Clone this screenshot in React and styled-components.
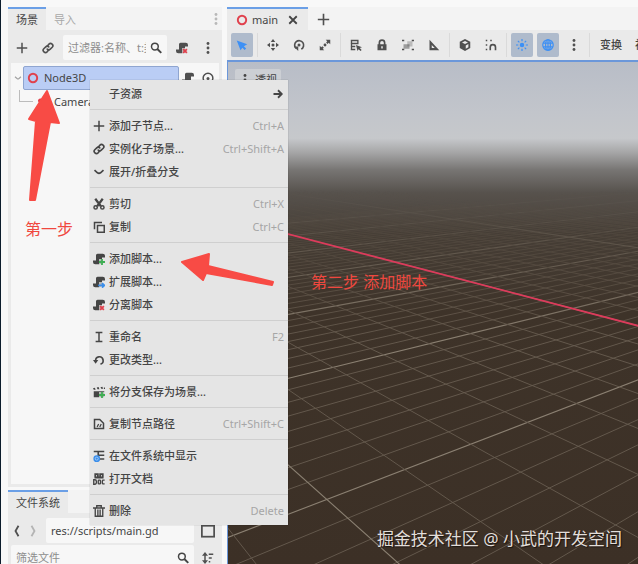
import React from 'react';
import styled, { createGlobalStyle } from 'styled-components';

const GlobalStyle = createGlobalStyle`
  * {
    box-sizing: border-box;
  }

  body {
    margin: 0;
    background-color: #f8f8f8;
    font-family: "Noto Sans", "Noto Sans CJK SC", sans-serif;
    font-size: 11px;
    line-height: 16px;
    color: #454545;
  }

  button,
  input {
    font: inherit;
    color: inherit;
  }
`;

// every icon is drawn on a 16 x 16 grid
const shapes = {
  add: <path d="M8 1v14M1 8h14" stroke="currentColor" strokeWidth="2" fill="none" />,
  close: <path d="M3 3l10 10M13 3L3 13" stroke="currentColor" strokeWidth="2.4" fill="none" />,
  link: (
    <g fill="none" stroke="currentColor" strokeWidth="2.2" strokeLinecap="round">
      <path d="M7 5.5l2.2-2.6a3 3 0 0 1 4.4 4.1L11 9.5a3 3 0 0 1-4 0" />
      <path d="M9 10.5l-2.2 2.6a3 3 0 0 1-4.4-4.1L5 6.5a3 3 0 0 1 4 0" />
    </g>
  ),
  search: (
    <g fill="none" stroke="currentColor" strokeWidth="2">
      <circle cx="6.5" cy="6" r="4.5" />
      <path d="M9.8 9.3L15 14.5" strokeWidth="2.6" />
    </g>
  ),
  dots: (
    <g fill="currentColor">
      <circle cx="8" cy="2" r="1.9" />
      <circle cx="8" cy="8" r="1.9" />
      <circle cx="8" cy="14" r="1.9" />
    </g>
  ),
  script: <path d="M6 1h7a3 3 0 0 1 3 3v2h-4v6a3 3 0 0 1-3 3H3a3 3 0 0 1-3-3v-2h4V3a2 2 0 0 1 2-2z" fill="currentColor" />,
  eye: (
    <g fill="none" stroke="currentColor" strokeWidth="2">
      <path d="M3.5 13A6.5 6.5 0 1 1 12.5 13" />
      <path d="M4 13.5c2.5 1.5 5.5 1.5 8 0" />
      <circle cx="8" cy="8.5" r="2" fill="currentColor" stroke="none" />
    </g>
  ),
  chevron: <path d="M2 5.5l4 3.500q2 1.500 4 0l4-3.500" fill="none" stroke="currentColor" strokeWidth="2.2" />,
  left: <path d="M10 1L6 8l4 7" fill="none" stroke="currentColor" strokeWidth="2.4" />,
  right: <path d="M6 1l4 7-4 7" fill="none" stroke="currentColor" strokeWidth="2.4" />,
  node: <circle cx="8" cy="8" r="5.6" fill="none" stroke="#e0414d" strokeWidth="2.6" />,
  camera: <path d="M10 2a3 3 0 0 0-3 3 3 3 0 1 0-4 4v4h8v-2l4 2V6l-2 1a3 3 0 0 0-3-5z" fill="#e0414d" />,
  arrow: <path d="M2 8h10M8 3l5 5-5 5" fill="none" stroke="currentColor" strokeWidth="2.4" />,
  cut: (
    <g fill="none" stroke="currentColor">
      <path d="M3 1l7.5 10M13 1L5.5 11" strokeWidth="3" />
      <circle cx="3.5" cy="12.5" r="2.2" strokeWidth="2" />
      <circle cx="12.5" cy="12.5" r="2.2" strokeWidth="2" />
    </g>
  ),
  copy: (
    <g fill="none" stroke="currentColor" strokeWidth="2">
      <path d="M2 11V2h10" />
      <rect x="6" y="6" width="9" height="9" />
    </g>
  ),
  rename: <path d="M3.5 2h9M3.5 14h9M8 2v12" fill="none" stroke="currentColor" strokeWidth="2" />,
  reload: (
    <g>
      <path d="M3.5 9a5 5 0 1 1 6.5 4.5" fill="none" stroke="currentColor" strokeWidth="2.2" />
      <path d="M0 8h7l-3.5 5z" fill="currentColor" />
    </g>
  ),
  clapper: (
    <g fill="currentColor">
      <path d="M1 7h14v8H1z" />
      <path d="M0 3l2.500-.6 1 2.6H1zM5 2l2.500-.6 1 2.900H6zM10 1.500L12.500 1l1 2.600H11zM14.500 2H16v2h-1.500z" />
    </g>
  ),
  path: (
    <g fill="none" stroke="currentColor" strokeWidth="2">
      <path d="M2 2h7l5 5v7H2z" />
      <path d="M5.5 12l2-4M9 12l2-4" strokeWidth="1.7" />
    </g>
  ),
  filesystem: (
    <g>
      <path d="M1 2h14M7 2v10h8M7 7h8" fill="none" stroke="currentColor" strokeWidth="2.2" />
      <circle cx="5" cy="11.5" r="4.5" fill="#3b8eea" />
      <circle cx="5" cy="11.5" r="2" fill="none" stroke="#b5d6fa" strokeWidth="1" />
    </g>
  ),
  help: (
    <g fill="none" stroke="currentColor" strokeWidth="1.8">
      <path d="M3 6V1.5h3.5V6M9.5 6V1.5H13V6M2 6h12" strokeWidth="2.4" />
      <path d="M1 9v6h1.5a2 2 0 0 0 2-2v-2a2 2 0 0 0-2-2zM15.5 9.5h-2a1 1 0 0 0-1 1v3a1 1 0 0 0 1 1h2" />
      <rect x="7" y="9.5" width="3" height="5" rx="1" />
    </g>
  ),
  trash: (
    <path
      d="M5 3V1h6v2M0 4h16M3 4v11h10V4M6.5 6v8M9.5 6v8"
      fill="none"
      stroke="currentColor"
      strokeWidth="1.8"
    />
  ),
  select: <path d="M1 2l14 5-4.5 2.5 3 3-2 2-3-3L6 15z" fill="#3d90f5" />,
  move: (
    <g fill="currentColor">
      <circle cx="8" cy="8" r="2" />
      <path d="M8 0l3 4H5zM8 16l3-4H5zM0 8l4-3v6zM16 8l-4-3v6z" />
    </g>
  ),
  rotate: (
    <g>
      <path d="M4 12.5a6 6 0 1 1 7 1" fill="none" stroke="currentColor" strokeWidth="2.2" />
      <path d="M1 10h6v6z" fill="currentColor" />
      <circle cx="8" cy="8" r="2" fill="currentColor" />
    </g>
  ),
  scale: (
    <g fill="currentColor">
      <path d="M9 1h6v6l-2-2-1.500 1.500-2-2L11 3zM7 15H1V9l2 2 1.500-1.500 2 2L5 13z" />
      <circle cx="8" cy="8" r="1.9" />
    </g>
  ),
  list: (
    <g>
      <path d="M2 1v13M1 2h10M1 6h10M1 10h6M1 14h6M10.500 1v6" fill="none" stroke="currentColor" strokeWidth="1.800" />
      <path d="M8 8l8 3-3 1 2.500 2.500L14 16l-2.500-2.500L10 16z" fill="currentColor" />
    </g>
  ),
  lock: (
    <g>
      <path d="M4.5 8V5a3.5 3.5 0 0 1 7 0v3" fill="none" stroke="currentColor" strokeWidth="2.2" />
      <path d="M2 7h12v8H2zM7 9.5v3h2v-3z" fill="currentColor" fillRule="evenodd" />
    </g>
  ),
  group: (
    <g fill="currentColor">
      <path d="M0 1h3v2H0zM13 1h3v2h-3zM0 13h3v2H0zM13 13h3v2h-3z" />
      <path d="M7 3h7v7H7z" opacity=".3" />
      <path d="M2 7h8v6H2z" opacity=".5" />
    </g>
  ),
  ruler: <path d="M2 1l13 14H2zM5 8v4h4z" fill="currentColor" fillRule="evenodd" />,
  cube: (
    <g>
      <path d="M8 0l7 3.5v8.5L8 16l-7-4V3.5z" fill="currentColor" />
      <path d="M4 4.500l4-2 4 2-4 2zM9 8.500l3.500-2v4.500L9 13z" fill="#eaeaea" />
    </g>
  ),
  snap: (
    <g fill="none" stroke="currentColor" strokeWidth="2">
      <path d="M7 15v-4a3.5 3.5 0 0 1 7 0v4" strokeWidth="2.2" />
      <path d="M1 2h2M7 2h2M1 8h2M1 14h2" />
    </g>
  ),
  sun: (
    <g fill="none" stroke="#3d90f5" strokeWidth="1.6">
      <circle cx="8" cy="8" r="3" fill="#3d90f5" stroke="none" />
      <path d="M8 0v3M8 13v3M0 8h3M13 8h3M2.5 2.5l2 2M11.5 11.5l2 2M13.5 2.5l-2 2M4.5 11.5l-2 2" />
    </g>
  ),
  globe: (
    <g fill="none" stroke="#3d90f5" strokeWidth="1.6">
      <circle cx="8" cy="8" r="7" />
      <ellipse cx="8" cy="8" rx="3.2" ry="7" />
      <path d="M1.5 5.5h13M1.5 10.5h13M8 1v14" />
    </g>
  ),
  box: <rect x="1" y="2" width="14" height="12.5" fill="none" stroke="currentColor" strokeWidth="2" />,
  sort: (
    <g fill="none" stroke="currentColor" strokeWidth="2">
      <path d="M4 2v12M9 3h6M9 8h4M9 13h2" />
      <path d="M0 5l4-5 4 5zM0 11l4 5 4-5z" fill="currentColor" stroke="none" />
    </g>
  ),
};

const badges = {
  plus: <path d="M12 8v8M8 12h8" stroke="#3fae54" strokeWidth="2.4" />,
  extend: <path d="M7 12.5h8M12 9.5l3 3-3 3" stroke="#3b8eea" strokeWidth="2.4" fill="none" />,
  cross: <path d="M9.5 9.5l5 5M14.5 9.5l-5 5" stroke="#e0414d" strokeWidth="2.4" />,
};

const Icon = ({ name, badge, size = 12 }) => (
  <IconSvg viewBox="0 0 16 16" width={size} height={size} aria-hidden="true">
    {shapes[name]}
    {badge && <path d="M8 8h8v8H8z" fill="#e6e6e6" opacity=".7" />}
    {badge && badges[badge]}
  </IconSvg>
);

const menuGroups = [
  [{ label: '子资源', submenu: true }],
  [
    { label: '添加子节点...', icon: 'add', keys: 'Ctrl+A' },
    { label: '实例化子场景...', icon: 'link', keys: 'Ctrl+Shift+A' },
    { label: '展开/折叠分支', icon: 'chevron' },
  ],
  [
    { label: '剪切', icon: 'cut', keys: 'Ctrl+X' },
    { label: '复制', icon: 'copy', keys: 'Ctrl+C' },
  ],
  [
    { label: '添加脚本...', icon: 'script', badge: 'plus' },
    { label: '扩展脚本...', icon: 'script', badge: 'extend' },
    { label: '分离脚本', icon: 'script', badge: 'cross' },
  ],
  [
    { label: '重命名', icon: 'rename', keys: 'F2' },
    { label: '更改类型...', icon: 'reload' },
  ],
  [{ label: '将分支保存为场景...', icon: 'clapper', badge: 'plus' }],
  [{ label: '复制节点路径', icon: 'path', keys: 'Ctrl+Shift+C' }],
  [
    { label: '在文件系统中显示', icon: 'filesystem' },
    { label: '打开文档', icon: 'help' },
  ],
  [{ label: '删除', icon: 'trash', keys: 'Delete' }],
];

const tools = [
  [{ icon: 'select', label: '选择', on: true }],
  [
    { icon: 'move', label: '移动' },
    { icon: 'rotate', label: '旋转' },
    { icon: 'scale', label: '缩放' },
  ],
  [
    { icon: 'list', label: '列表选择' },
    { icon: 'lock', label: '锁定' },
    { icon: 'group', label: '编组' },
    { icon: 'ruler', label: '标尺' },
  ],
  [
    { icon: 'cube', label: '局部空间' },
    { icon: 'snap', label: '吸附' },
  ],
  [
    { icon: 'sun', label: '预览阳光', on: true },
    { icon: 'globe', label: '预览环境', on: true },
    { icon: 'dots', label: '更多' },
  ],
];

// Ground grid: each family of parallel lines meets in one point on the horizon,
// and 1 / depth grows by the same step from line to line.
const HORIZON = 137;
const families = [
  { vx: 1270, first: 0.00265, step: 0.0001865, from: -9, to: 52 },
  { vx: -80, first: 0.00305, step: 0.000911, from: -3, to: 22 },
];

const gridLines = families.flatMap(({ vx, first, step, from, to }) => {
  const lines = [];
  for (let n = from; n <= to; n++) {
    const slope = 1 / (first + n * step) / (288 - vx);
    lines.push({
      key: `${vx}:${n}`,
      y1: HORIZON + slope * (200 - vx),
      y2: HORIZON + slope * (1000 - vx),
      major: n % 8 === 0,
    });
  }
  return lines;
});

const Ground = () => (
  <Scene viewBox="228 62 410 502" preserveAspectRatio="xMinYMin slice" aria-hidden="true">
    <defs>
      <linearGradient id="sky" gradientUnits="userSpaceOnUse" x1="0" y1="62" x2="0" y2="564">
        <stop offset="0" stopColor="#b8bdc7" />
        <stop offset=".1" stopColor="#c2c5cb" />
        <stop offset=".152" stopColor="#c6c8cb" />
        <stop offset=".18" stopColor="#a6a6a7" />
        <stop offset=".215" stopColor="#777573" />
        <stop offset=".26" stopColor="#57524d" />
        <stop offset=".34" stopColor="#463e36" />
        <stop offset=".5" stopColor="#3e3329" />
        <stop offset="1" stopColor="#3c3026" />
      </linearGradient>
      <linearGradient id="fade" gradientUnits="userSpaceOnUse" x1="0" y1="190" x2="0" y2="340">
        <stop offset="0" stopColor="#000" />
        <stop offset=".4" stopColor="#666" />
        <stop offset="1" stopColor="#fff" />
      </linearGradient>
      <mask id="distance" maskUnits="userSpaceOnUse" x="200" y="62" width="800" height="900">
        <rect x="200" y="62" width="800" height="900" fill="url(#fade)" />
      </mask>
    </defs>
    <rect x="200" y="62" width="900" height="900" fill="url(#sky)" />
    <g mask="url(#distance)">
      {gridLines.map((line) => (
        <line
          key={line.key}
          x1="200"
          x2="1000"
          y1={line.y1}
          y2={line.y2}
          stroke={line.major ? '#8b8072' : '#685c50'}
          strokeWidth={line.major ? 1.1 : 0.9}
        />
      ))}
    </g>
    <line x1="200" y1="211" x2="1000" y2="420.5" stroke="#dc3b5b" strokeWidth="1.8" />
  </Scene>
);

const App = () => (
  <Editor>
    <GlobalStyle />
    <Sidebar>
      <Dock $grow>
        <TabBar>
          <Tab $active>场景</Tab>
          <Tab>导入</Tab>
          <DockMenu aria-label="面板菜单"><Icon name="dots" /></DockMenu>
        </TabBar>
        <Panel>
          <Row>
            <IconButton aria-label="添加节点"><Icon name="add" /></IconButton>
            <IconButton aria-label="实例化"><Icon name="link" /></IconButton>
            <Field $tight>
              <input aria-label="过滤节点" placeholder="过滤器:名称、t:类型" />
              <Icon name="search" />
            </Field>
            <IconButton aria-label="分离脚本"><Icon name="script" badge="cross" /></IconButton>
            <IconButton aria-label="更多"><Icon name="dots" /></IconButton>
          </Row>
          <Tree>
            <TreeRow>
              <Fold><Icon name="chevron" size={8} /></Fold>
              <Node $selected>
                <Icon name="node" />
                Node3D
              </Node>
              <TreeActions>
                <Icon name="script" />
                <Icon name="eye" />
              </TreeActions>
            </TreeRow>
            <TreeRow>
              <Branch />
              <Node>
                <Icon name="camera" />
                Camera3D
              </Node>
            </TreeRow>
          </Tree>
        </Panel>
      </Dock>
      <Dock>
        <TabBar>
          <Tab $active>文件系统</Tab>
        </TabBar>
        <Panel>
          <Row $tight>
            <History>
              <button aria-label="后退"><Icon name="left" /></button>
              <button aria-label="前进" disabled><Icon name="right" /></button>
            </History>
            <Field>
              <input aria-label="路径" defaultValue="res://scripts/main.gd" />
            </Field>
            <IconButton aria-label="切换布局"><Icon name="box" size={14} /></IconButton>
          </Row>
          <Row $tight>
            <Field>
              <input aria-label="筛选文件" placeholder="筛选文件" />
              <Icon name="search" />
            </Field>
            <IconButton aria-label="排序"><Icon name="sort" /></IconButton>
          </Row>
        </Panel>
      </Dock>
    </Sidebar>

    <Main>
      <TabBar $spaced>
        <Tab $active $scene>
          <Icon name="node" />
          main
          <Icon name="close" />
        </Tab>
        <IconButton aria-label="新建场景"><Icon name="add" size={13} /></IconButton>
      </TabBar>
      <Toolbar>
        {tools.map((group, i) => (
          <React.Fragment key={i}>
            {group.map((tool) => (
              <IconButton key={tool.icon} aria-label={tool.label} $on={tool.on}>
                <Icon name={tool.icon} />
              </IconButton>
            ))}
            <Divider />
          </React.Fragment>
        ))}
        <TextButton>变换</TextButton>
        <TextButton>视图</TextButton>
      </Toolbar>
      <Viewport>
        <Ground />
        <ViewButton>
          <Icon name="dots" />
          透视
        </ViewButton>
        <Watermark>掘金技术社区 @ 小武的开发空间</Watermark>
      </Viewport>
    </Main>

    <Menu role="menu">
      {menuGroups.map((group, i) => (
        <MenuGroup key={i}>
          {group.map((item) => (
            <MenuItem key={item.label} role="menuitem">
              {item.icon ? <Icon name={item.icon} badge={item.badge} /> : <span />}
              <span>{item.label}</span>
              {item.keys && <kbd>{item.keys}</kbd>}
              {item.submenu && <Icon name="arrow" />}
            </MenuItem>
          ))}
        </MenuGroup>
      ))}
    </Menu>

    <Arrows aria-hidden="true">
      <path d="M47 91L59 123L50 122L35 200H30L36 121L29 119Z" />
      <path d="M182 262L209 254L208 266L273 282L272 285L206 273L203 280Z" />
    </Arrows>
    <Note $x={24} $y={217}>第一步</Note>
    <Note $x={310} $y={270}>第二步 添加脚本</Note>
  </Editor>
);

const IconSvg = styled.svg`
  display: block;
  flex: none;
`;

const Editor = styled.div`
  position: relative;
  display: grid;
  grid-template-columns: 214px 1fr;
  column-gap: 5px;
  height: 100vh;
  padding: 7px 0 0 7px;
  border-left: 1px solid #0c1c2c;
  overflow: hidden;
`;

const Sidebar = styled.aside`
  display: flex;
  flex-direction: column;
  gap: 3px;
  min-height: 0;
`;

const Dock = styled.section`
  display: flex;
  flex-direction: column;
  flex: ${({ $grow }) => ($grow ? '1 1 0' : '0 0 74px')};
  min-height: 0;
  overflow: hidden;
`;

const TabBar = styled.div`
  display: flex;
  flex: none;
  align-items: stretch;
  gap: ${({ $spaced }) => ($spaced ? '4px' : '0')};
  height: 23px;
  background-color: #f3f3f3;
`;

const Tab = styled.button`
  display: flex;
  align-items: center;
  gap: 4px;
  padding: ${({ $scene }) => ($scene ? '0 9px' : '0 8px')};
  border: none;
  border-top: 2px solid ${({ $active }) => ($active ? '#6b9fe6' : 'transparent')};
  background-color: ${({ $active }) => ($active ? '#eaeaea' : 'transparent')};
  color: ${({ $active }) => ($active ? '#454545' : '#a8a8a8')};

  svg:last-child {
    margin-left: 5px;
  }
`;

const DockMenu = styled.button`
  margin-left: auto;
  padding: 0;
  border: none;
  background: none;
  color: #b8b8b8;
`;

const Panel = styled.div`
  display: flex;
  flex: 1;
  flex-direction: column;
  min-height: 0;
  padding: 4px 3px 3px;
  background-color: #eaeaea;
`;

const Row = styled.div`
  display: flex;
  flex: none;
  align-items: center;
  gap: ${({ $tight }) => ($tight ? '3px' : '4px')};
  height: 27px;
`;

const IconButton = styled.button`
  display: flex;
  flex: none;
  align-items: center;
  justify-content: center;
  width: 22px;
  height: 24px;
  padding: 0;
  border: none;
  border-radius: 2px;
  background-color: ${({ $on }) => ($on ? '#afbbcc' : 'transparent')};
  color: #505050;
`;

const Field = styled.div`
  display: flex;
  flex: 1;
  align-items: center;
  gap: ${({ $tight }) => ($tight ? '4px' : '8px')};
  min-width: 0;
  height: 25px;
  padding: 0 5px;
  border-radius: 2px;
  background-color: #f7f7f7;

  input {
    flex: 1;
    min-width: 0;
    padding: 0;
    border: none;
    outline: none;
    background: none;
  }

  input::placeholder {
    color: #8d8d8d;
  }
`;

const Tree = styled.div`
  flex: 1;
  margin-top: 2px;
  padding: 3px 0;
  background-color: #f7f7f7;
`;

const TreeRow = styled.div`
  display: flex;
  align-items: center;
  height: 24px;
`;

const Fold = styled.span`
  width: 12px;
  padding-left: 3px;
  color: #a0a0a0;
`;

const Branch = styled.span`
  align-self: flex-start;
  width: 14px;
  height: 12px;
  margin-left: 8px;
  border: solid #bcbcbc;
  border-width: 0 0 1px 1px;
`;

const Node = styled.div`
  display: flex;
  flex: 0 0 156px;
  align-items: center;
  gap: 5px;
  height: 24px;
  padding: 0 3px;
  border: 1px solid ${({ $selected }) => ($selected ? '#8fa5d0' : 'transparent')};
  border-radius: 2px;
  background-color: ${({ $selected }) => ($selected ? '#bacdf5' : 'transparent')};
`;

const TreeActions = styled.div`
  display: flex;
  gap: 8px;
  padding-left: 3px;
  color: #505050;
`;

const History = styled.div`
  display: flex;
  gap: 4px;
  width: 32px;

  button {
    padding: 0;
    border: none;
    background: none;
    color: #505050;
  }

  button:disabled {
    color: #b4b4b4;
  }
`;

const Main = styled.main`
  display: flex;
  flex-direction: column;
  min-width: 0;
  min-height: 0;
`;

const Toolbar = styled.div`
  display: flex;
  flex: none;
  align-items: center;
  gap: 4px;
  height: 30px;
  padding-left: 4px;
  background-color: #eaeaea;
  overflow: hidden;
`;

const Divider = styled.span`
  flex: none;
  width: 1px;
  height: 24px;
  background-color: #dadada;
`;

const TextButton = styled.button`
  flex: none;
  padding: 0 3px 0 6px;
  border: none;
  background: none;
  font-weight: 500;
`;

const Viewport = styled.div`
  position: relative;
  flex: 1;
  min-height: 0;
  border-top: 2px solid #6b97da;
  border-left: 1px solid #6b97da;
  overflow: hidden;
`;

const Scene = styled.svg`
  display: block;
  width: 100%;
  height: 100%;
`;

const ViewButton = styled.button`
  position: absolute;
  top: 7px;
  left: 7px;
  display: flex;
  align-items: center;
  gap: 4px;
  height: 22px;
  padding: 0 4px;
  border: none;
  border-radius: 2px;
  background-color: #cccfd4;
`;

const Watermark = styled.p`
  position: absolute;
  right: 16px;
  bottom: 13px;
  margin: 0;
  font-size: 17px;
  line-height: 24px;
  color: #e2deda;
  text-shadow: 1px 1px 1px rgba(0, 0, 0, 0.6);
  white-space: nowrap;
`;

const Menu = styled.div`
  position: absolute;
  top: 80px;
  left: 89px;
  width: 198px;
  padding: 2px 0 3px;
  background-color: #e5e5e5;
  box-shadow: 0 0 1px rgba(0, 0, 0, 0.3);
`;

const MenuGroup = styled.div`
  & + & {
    margin-top: 4px;
    padding-top: 4px;
    border-top: 1px solid #cfcfcf;
  }
`;

const MenuItem = styled.button`
  display: grid;
  grid-template-columns: 12px 1fr auto;
  align-items: center;
  column-gap: 4px;
  width: 100%;
  height: 23px;
  padding: 0 4px 0 3px;
  border: none;
  background: none;
  font-weight: 500;
  text-align: left;
  white-space: nowrap;

  kbd {
    font: inherit;
    font-weight: 400;
    color: #a6a6a6;
  }
`;

const Arrows = styled.svg`
  position: absolute;
  top: 0;
  left: -1px;
  width: 290px;
  height: 300px;
  pointer-events: none;

  path {
    fill: #f84b45;
    stroke: #f84b45;
    stroke-width: 2;
    stroke-linejoin: round;
  }
`;

const Note = styled.p`
  position: absolute;
  top: ${({ $y }) => $y}px;
  left: ${({ $x }) => $x}px;
  margin: 0;
  font-size: 16px;
  line-height: 24px;
  color: #f0483f;
  white-space: nowrap;
`;

export default App;
